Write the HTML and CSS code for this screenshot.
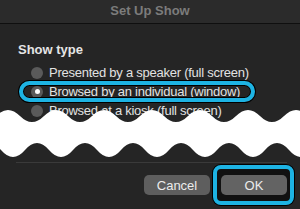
FILE: index.html
```html
<!DOCTYPE html>
<html>
<head>
<meta charset="utf-8">
<link rel="stylesheet" href="styles.css">
</head>
<body>
<div class="window">
  <div class="titlebar">Set Up Show</div>
  <div class="content">
    <div class="label">Show type</div>
    <div class="options">
      <div class="row"><span class="radio"></span><span class="text">Presented by a speaker (full screen)</span></div>
      <div class="row selected"><span class="radio on"></span><span class="text">Browsed by an individual (window)</span></div>
      <div class="row"><span class="radio"></span><span class="text">Browsed at a kiosk (full screen)</span></div>
    </div>
    <svg class="tear" width="300" height="60" viewBox="0 0 300 60">
      <path d="M -4 16 Q 8 4 20 16 T 44 16 T 68 16 T 92 16 T 116 16 T 140 16 T 164 16 T 188 16 T 212 16 T 236 16 T 260 16 T 284 16 T 308 16 T 332 16 L 313 50 Q 301 64 289 50 T 265 50 T 241 50 T 217 50 T 193 50 T 169 50 T 145 50 T 121 50 T 97 50 T 73 50 T 49 50 T 25 50 T 1 50 T -23 50 Z" fill="#ffffff"/>
    </svg>
  </div>
  <div class="footer">
    <button class="btn">Cancel</button>
    <button class="btn ok">OK</button>
  </div>
</div>
</body>
</html>
```
FILE: styles.css
```css
html, body {
  margin: 0;
  padding: 0;
  background: #252525;
}
body {
  width: 300px;
  height: 209px;
  overflow: hidden;
  font-family: "Liberation Sans", Arial, sans-serif;
}
.window {
  display: flex;
  flex-direction: column;
  height: 209px;
  background: #252525;
}
.titlebar {
  height: 23px;
  line-height: 21px;
  text-align: center;
  background: #2b2b2b;
  border-bottom: 1px solid #0f0f0f;
  color: #7c7c7c;
  font-weight: bold;
  font-size: 13px;
}
.content {
  flex: 1;
  position: relative;
  padding: 18px 0 0 18px;
}
.label {
  color: #e6e6e6;
  font-weight: bold;
  font-size: 13px;
  line-height: 16px;
  margin-bottom: 5px;
}
.options {
  display: flex;
  flex-direction: column;
}
.row {
  position: relative;
  display: flex;
  align-items: center;
  gap: 6px;
  height: 19px;
  padding-left: 13px;
  color: #e2e2e2;
  font-size: 13px;
  letter-spacing: -0.25px;
}
.row.selected::after {
  content: "";
  position: absolute;
  left: 1px;
  top: -1px;
  width: 236px;
  height: 21px;
  box-sizing: border-box;
  border: 4px solid #1db3e3;
  border-radius: 11px;
  box-shadow: 0 0 0 1px #000, inset 0 0 0 1px #000;
}
.radio {
  width: 12px;
  height: 12px;
  border-radius: 50%;
  background: #5a5a5a;
  flex: none;
  display: flex;
  align-items: center;
  justify-content: center;
}
.radio.on::before {
  content: "";
  width: 5px;
  height: 5px;
  border-radius: 50%;
  background: #fff;
}
.tear {
  position: absolute;
  left: 0;
  top: 76px;
}
.footer {
  position: relative;
  z-index: 0;
  display: flex;
  justify-content: flex-end;
  gap: 11px;
  margin: 0 13px 0 16px;
  border-top: 1px solid #3a3a3a;
  padding: 12px 0 14px;
}
.btn {
  position: relative;
  width: 66px;
  height: 20px;
  border: none;
  border-radius: 5px;
  background: #5e5e5e;
  color: #ececec;
  font-family: "Liberation Sans", Arial, sans-serif;
  font-size: 13px;
  padding: 0;
}
.btn.ok {
  background: #636363;
}
.btn.ok::before {
  content: "";
  position: absolute;
  left: -8px;
  top: -10px;
  right: -7px;
  bottom: -10px;
  border: 4px solid #1db3e3;
  border-radius: 8px;
  background: #111;
  box-shadow: 0 0 0 1px #000;
  z-index: -1;
}
```
